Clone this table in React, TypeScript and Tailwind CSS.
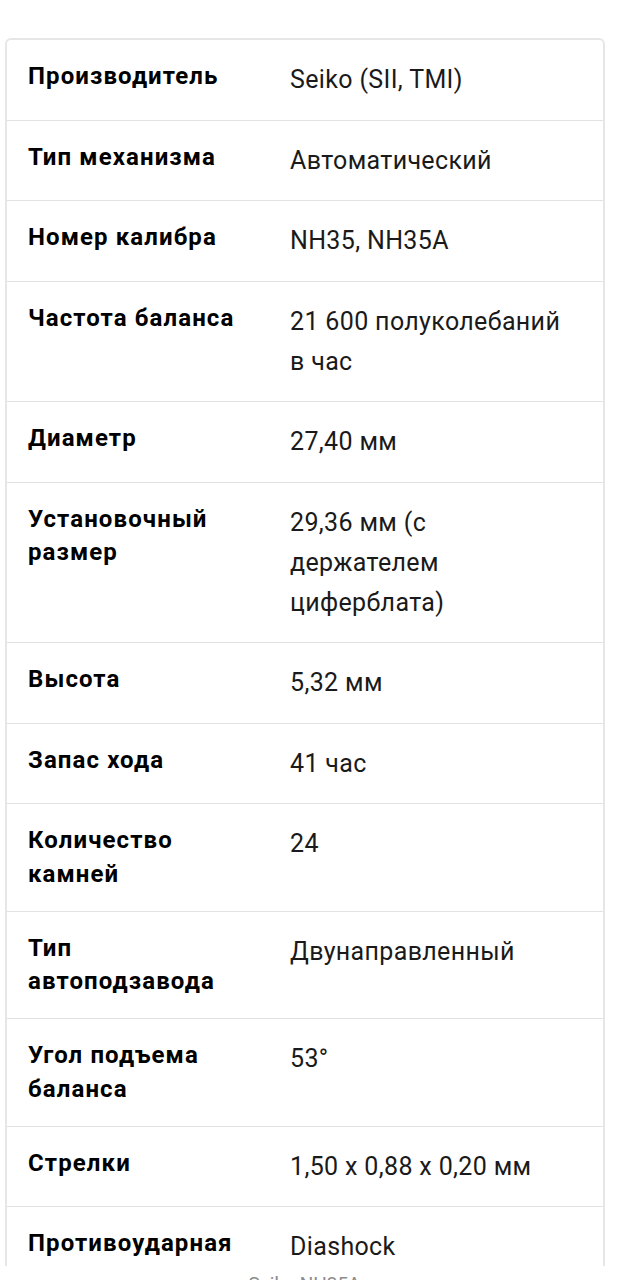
import React from "react";

const rows: [string, string][] = [
  ["Производитель", "Seiko (SII, TMI)"],
  ["Тип механизма", "Автоматический"],
  ["Номер калибра", "NH35, NH35A"],
  ["Частота баланса", "21 600 полуколебаний в час"],
  ["Диаметр", "27,40 мм"],
  ["Установочный размер", "29,36 мм (с держателем циферблата)"],
  ["Высота", "5,32 мм"],
  ["Запас хода", "41 час"],
  ["Количество камней", "24"],
  ["Тип автоподзавода", "Двунаправленный"],
  ["Угол подъема баланса", "53°"],
  ["Стрелки", "1,50 x 0,88 x 0,20 мм"],
  ["Противоударная система", "Diashock"],
  ["Регулировка", "Есть"],
];

export default function App() {
  return (
    <div
      className="w-[617px] min-h-[1280px] bg-white pt-[38px]"
      style={{ fontFamily: "Roboto, 'Noto Sans', sans-serif" }}
    >
      <div className="ml-[5px] w-[600px] h-[1228px] overflow-hidden rounded-t-[6px] border-2 border-b-0 border-[#e6e6e6]">
        {rows.map(([k, v]) => (
          <div
            key={k}
            className="grid grid-cols-[262px_1fr] border-b border-[#e2e2e2]"
          >
            <div className="pl-[21px] pr-[18px] pt-[20px] pb-[19.5px] text-[24px] leading-[33.5px] tracking-[1.1px] font-bold text-black">
              {k}
            </div>
            <div className="pl-[21px] pr-[30px] pt-[20px] pb-[19.5px] text-[25px] leading-[40px] tracking-[0.35px] text-[#1a1a1a]">
              {v}
            </div>
          </div>
        ))}
      </div>
      <div className="pt-[4px] text-center text-[19px] leading-[28px] text-[#8a8a8a] pr-[8px]">
        Seiko NH35A
      </div>
    </div>
  );
}
